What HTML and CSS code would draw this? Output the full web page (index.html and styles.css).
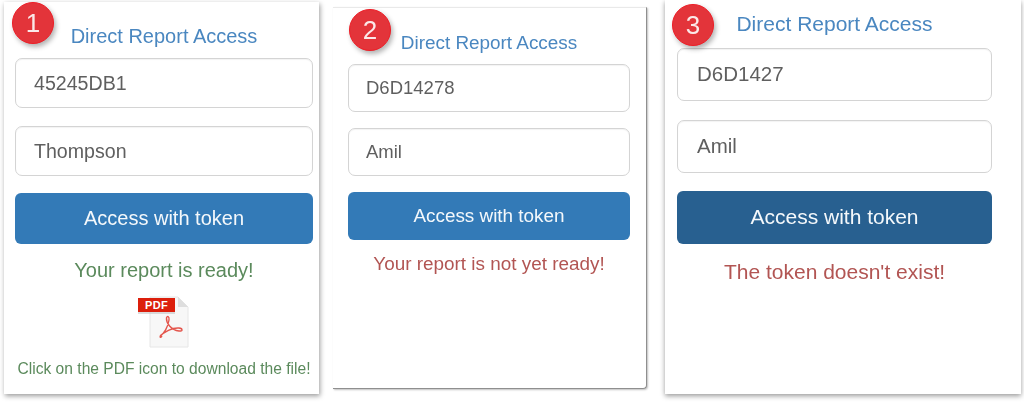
FILE: index.html
```html
<!DOCTYPE html>
<html lang="en">
<head>
<meta charset="utf-8">
<title>Direct Report Access</title>
<link rel="stylesheet" href="styles.css">
</head>
<body>
<main class="sheet">
  <section class="panel panel-one">
    <span class="badge">1</span>
    <h2 class="title">Direct Report Access</h2>
    <input class="field" type="text" value="45245DB1">
    <input class="field" type="text" value="Thompson">
    <button class="action" type="button">Access with token</button>
    <p class="status ok">Your report is ready!</p>
    <svg class="pdf" viewBox="0 0 52 52" width="52" height="52" aria-hidden="true">
      <path d="M13 1H41L51 11V51H13Z" fill="#f7f7f7" stroke="#e6e6e6"/>
      <path d="M41 1V11H51Z" fill="#dedede"/>
      <rect x="1" y="4" width="37" height="14" fill="#b9b9b9" opacity=".5"/>
      <rect x="1" y="2" width="37" height="14" fill="#dc1f0c"/>
      <text x="19.500" y="13" class="pdf-label">PDF</text>
      <path d="M23 40C27 38 31 31 32 24C32.500 20 30 19.500 29.500 22C29 27 34 34 42 35C46 35.500 46 32.500 42 32C35 31.500 27 36 23.500 40C22.500 41.500 23.500 42 25 40" fill="none" stroke="#e4564d" stroke-width="1.400"/>
    </svg>
    <p class="hint ok">Click on the PDF icon to download the file!</p>
  </section>
  <section class="panel panel-two">
    <span class="badge">2</span>
    <h2 class="title">Direct Report Access</h2>
    <input class="field" type="text" value="D6D14278">
    <input class="field" type="text" value="Amil">
    <button class="action" type="button">Access with token</button>
    <p class="status bad">Your report is not yet ready!</p>
  </section>
  <section class="panel panel-three">
    <span class="badge">3</span>
    <h2 class="title">Direct Report Access</h2>
    <input class="field" type="text" value="D6D1427">
    <input class="field" type="text" value="Amil">
    <button class="action" type="button">Access with token</button>
    <p class="status bad">The token doesn't exist!</p>
  </section>
</main>
</body>
</html>
```
FILE: styles.css
```css
* { box-sizing: border-box; }
html, body { margin: 0; height: 403px; overflow: hidden; background: #fff; }
body { font-family: "Liberation Sans", Arial, sans-serif; }
.sheet { display: flex; align-items: flex-start; filter: blur(0.5px); }

.panel {
  position: relative;
  display: flex;
  flex-direction: column;
  flex: none;
  background: #fff;
}
.panel-one {
  --fs: 20px; --ffs: 19.600px; --pad: 18px; --field: 50px; --field-gap: 18px; --btn-top: 17px; --btn: 51px;
  width: 315px; height: 392px; margin: 2px 0 0 4px;
  padding: 0 6px 0 11px;
  box-shadow: 1px 2px 5px rgba(0,0,0,.4);
}
.panel-two {
  --fs: 18.900px; --ffs: 18.500px; --pad: 17px; --field: 48px; --field-gap: 16px; --btn-top: 16px; --btn: 48px;
  width: 314px; height: 382px; margin: 7px 0 0 14px;
  padding: 0 16px 0 15px;
  border-top: 1px solid #e9e9e9;
  border-right: 1px solid #8f8f8f;
  border-bottom: 1px solid #8f8f8f;
  border-bottom-right-radius: 4px;
  box-shadow: 1px 1px 2px rgba(0,0,0,.25);
}
.panel-three {
  --fs: 21px; --ffs: 20.500px; --pad: 19px; --field: 53px; --field-gap: 19px; --btn-top: 18px; --btn: 53px;
  width: 356px; height: 394px; margin: 0 0 0 18px;
  padding: 0 29px 0 12px;
  box-shadow: 0 2px 5px rgba(0,0,0,.4);
}

.badge {
  position: absolute;
  width: 42px; height: 42px;
  border-radius: 50%;
  background: #e3343a;
  border: 1px solid #ee1c25;
  color: #fbe9e9;
  font-size: 26px;
  line-height: 40px;
  text-align: center;
  box-shadow: 2px 3px 5px rgba(0,0,0,.3);
}
.panel-one .badge { left: 8px; top: 0; }
.panel-two .badge { left: 16px; top: 1px; }
.panel-three .badge { left: 7px; top: 4px; }

.title {
  margin: 0;
  font-size: var(--fs);
  font-weight: 400;
  line-height: 24px;
  color: #4a87c0;
  text-align: center;
}
.panel-one .title { margin: 22px 0 10px; }
.panel-two .title { margin: 23px 0 9px; }
.panel-three .title { margin: 12px 0 12px; }

.field {
  display: block;
  width: 100%;
  height: var(--field);
  margin: 0 0 var(--field-gap);
  padding: 0 var(--pad);
  border: 1px solid #d4d4d4;
  border-radius: 7px;
  background: #fff;
  font: var(--ffs) "Liberation Sans", Arial, sans-serif;
  color: #5f5f5f;
  box-shadow: inset 0 1px 1px rgba(0,0,0,.05);
}
.field:nth-of-type(2) { margin-bottom: var(--btn-top); }
.panel-three .field { padding-bottom: 2px; }

.action {
  display: block;
  width: 100%;
  height: var(--btn);
  border: 0;
  border-radius: 6px;
  background: #337ab7;
  color: #f4f8fb;
  font: var(--fs) "Liberation Sans", Arial, sans-serif;
}
.panel-three .action { background: #286090; padding-bottom: 2px; }

.status {
  margin: 14px 0 0;
  font-size: var(--fs);
  line-height: 24px;
  text-align: center;
}
.panel-two .status { margin-top: 12px; }
.panel-three .status { margin-top: 16px; }
.ok { color: #5b8a5c; }
.bad { color: #b25553; }

.pdf { align-self: center; margin: 14px 0 0 -3px; flex: none; }
.pdf-label { font: 700 11px "Liberation Sans", Arial, sans-serif; fill: #fff; text-anchor: middle; letter-spacing: .4px; }
.hint {
  margin: 11px 0 0;
  font-size: 15.600px;
  line-height: 20px;
  text-align: center;
  white-space: nowrap;
}
```
